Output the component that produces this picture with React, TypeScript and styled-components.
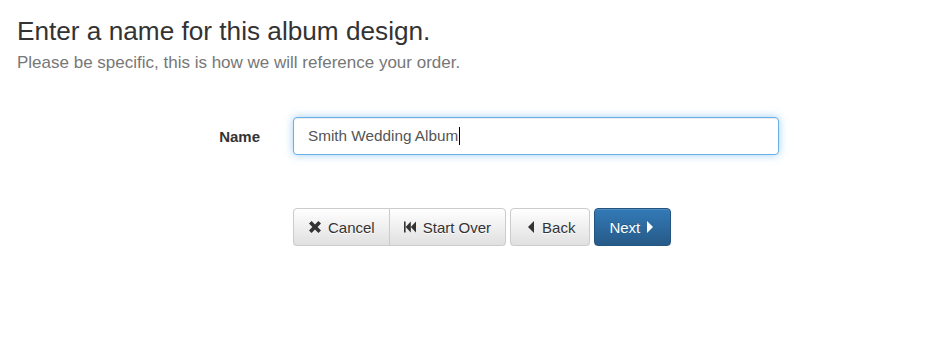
import React from 'react';
import styled, { createGlobalStyle } from 'styled-components';

const GlobalStyle = createGlobalStyle`
  html, body {
    margin: 0;
    padding: 0;
    background: #ffffff;
  }
  body {
    font-family: "Liberation Sans", Arial, sans-serif;
    font-size: 15px;
    color: #333333;
  }
`;

const Page = styled.div`
  padding: 0 17px;
`;

const Title = styled.h3`
  margin: 17px 0 0 0;
  font-size: 26.2px;
  line-height: 28px;
  font-weight: 400;
  color: #333333;
`;

const Lead = styled.p`
  margin: 7px 0 0 0;
  font-size: 17px;
  line-height: 22px;
  color: #777777;
`;

const Form = styled.div`
  margin-top: 43px;
  display: grid;
  grid-template-columns: 243px 486px;
  column-gap: 33px;
  row-gap: 53px;
  align-items: center;
`;

const Label = styled.label`
  text-align: right;
  font-weight: 700;
  font-size: 15px;
  color: #333333;
`;

const Field = styled.div`
  box-sizing: border-box;
  height: 38px;
  padding: 0 14px;
  display: flex;
  align-items: center;
  border: 1px solid #66afe9;
  border-radius: 4px;
  background: #ffffff;
  font-size: 15.3px;
  color: #555555;
  box-shadow: inset 0 1px 1px rgba(0, 0, 0, 0.075), 0 0 8px rgba(102, 175, 233, 0.6);
`;

const Caret = styled.span`
  display: inline-block;
  width: 1px;
  height: 18px;
  background: #000000;
  margin-left: 1px;
`;

const Actions = styled.div`
  grid-column: 2;
  display: flex;
  gap: 4px;
`;

const Group = styled.div`
  display: flex;
`;

const Button = styled.button<{ $primary?: boolean; $join?: 'left' | 'right' }>`
  box-sizing: border-box;
  height: 38px;
  padding: 0 14px;
  display: inline-flex;
  align-items: center;
  gap: 7px;
  font-family: "Liberation Sans", Arial, sans-serif;
  font-size: 15px;
  cursor: pointer;
  border: 1px solid ${p => (p.$primary ? '#245580' : '#cccccc')};
  border-radius: ${p => (p.$join === 'left' ? '4px 0 0 4px' : p.$join === 'right' ? '0 4px 4px 0' : '4px')};
  margin-left: ${p => (p.$join === 'right' ? '-1px' : '0')};
  color: ${p => (p.$primary ? '#ffffff' : '#333333')};
  background-image: ${p =>
    p.$primary
      ? 'linear-gradient(to bottom, #337ab7 0%, #265a88 100%)'
      : 'linear-gradient(to bottom, #ffffff 0%, #e0e0e0 100%)'};
  text-shadow: ${p => (p.$primary ? '0 -1px 0 rgba(0,0,0,.2)' : '0 1px 0 #fff')};
  box-shadow: inset 0 1px 0 rgba(255, 255, 255, 0.15), 0 1px 1px rgba(0, 0, 0, 0.075);
`;

const Icon = styled.svg<{ $w?: number; $ml?: number; $mr?: number }>`
  width: ${p => p.$w ?? 12}px;
  height: 12px;
  margin-left: ${p => p.$ml ?? 0}px;
  margin-right: ${p => p.$mr ?? 0}px;
  flex: none;
  fill: currentColor;
`;

const RemoveIcon = () => (
  <Icon viewBox="0 0 12 12" $ml={1}>
    <path d="M0 2.6L2.6 0L6 3.4L9.4 0L12 2.6L8.6 6L12 9.4L9.4 12L6 8.6L2.6 12L0 9.4L3.4 6Z" />
  </Icon>
);

const FastBackwardIcon = () => (
  <Icon viewBox="0 0 12 12">
    <rect x="0" y="0.5" width="1.6" height="11" />
    <path d="M1.6 6L6.8 0.5V11.5Z" />
    <path d="M6.8 6L12 0.5V11.5Z" />
  </Icon>
);

const TriangleLeft = () => (
  <Icon viewBox="0 0 6 12" $w={6} $ml={3} $mr={1}>
    <path d="M0 6L6 0V12Z" />
  </Icon>
);

const TriangleRight = () => (
  <Icon viewBox="0 0 6 12" $w={6} $mr={3}>
    <path d="M6 6L0 0V12Z" />
  </Icon>
);

export default function App() {
  return (
    <Page>
      <GlobalStyle />
      <Title>Enter a name for this album design.</Title>
      <Lead>Please be specific, this is how we will reference your order.</Lead>
      <Form>
        <Label>Name</Label>
        <Field role="textbox">
          Smith Wedding Album
          <Caret />
        </Field>
        <Actions>
          <Group>
            <Button $join="left">
              <RemoveIcon />
              Cancel
            </Button>
            <Button $join="right">
              <FastBackwardIcon />
              Start Over
            </Button>
          </Group>
          <Button>
            <TriangleLeft />
            Back
          </Button>
          <Button $primary>
            Next
            <TriangleRight />
          </Button>
        </Actions>
      </Form>
    </Page>
  );
}
